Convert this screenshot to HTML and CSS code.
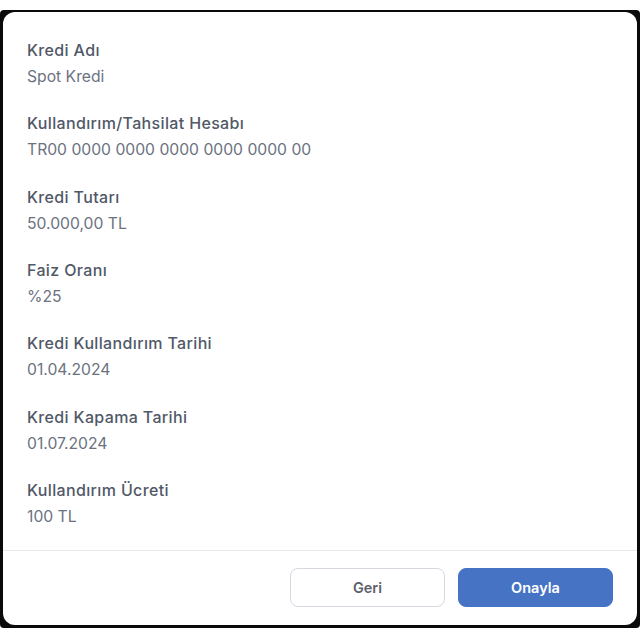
FILE: index.html
```html
<!DOCTYPE html>
<html lang="tr">
<head>
<meta charset="utf-8">
<title>Kredi Özeti</title>
<link rel="stylesheet" href="styles.css">
</head>
<body>
<div class="frame">
  <div class="card">
    <div class="details">
      <div class="field">
        <div class="label">Kredi Adı</div>
        <div class="value">Spot Kredi</div>
      </div>
      <div class="field">
        <div class="label">Kullandırım/Tahsilat Hesabı</div>
        <div class="value">TR00 0000 0000 0000 0000 0000 00</div>
      </div>
      <div class="field">
        <div class="label">Kredi Tutarı</div>
        <div class="value">50.000,00 TL</div>
      </div>
      <div class="field">
        <div class="label">Faiz Oranı</div>
        <div class="value">%25</div>
      </div>
      <div class="field">
        <div class="label">Kredi Kullandırım Tarihi</div>
        <div class="value">01.04.2024</div>
      </div>
      <div class="field">
        <div class="label">Kredi Kapama Tarihi</div>
        <div class="value">01.07.2024</div>
      </div>
      <div class="field">
        <div class="label">Kullandırım Ücreti</div>
        <div class="value">100 TL</div>
      </div>
    </div>
    <div class="footer">
      <button class="btn btn-secondary">Geri</button>
      <button class="btn btn-primary">Onayla</button>
    </div>
  </div>
</div>
</body>
</html>
```
FILE: styles.css
```css
html, body {
  margin: 0;
  padding: 0;
  background: #ffffff;
}

body {
  font-family: Inter, "Noto Sans", "DejaVu Sans", sans-serif;
}

.frame {
  margin-top: 10px;
  height: 618px;
  box-sizing: border-box;
  padding: 2px 3px 3px 3px;
  background: #0a0a0a;
  border-radius: 4px;
}

.card {
  height: 100%;
  box-sizing: border-box;
  background: #ffffff;
  border-radius: 12px;
  display: flex;
  flex-direction: column;
}

.details {
  flex: 1;
  padding: 25px 24px 0 24px;
  display: flex;
  flex-direction: column;
  gap: 20.33px;
}

.field {
  display: flex;
  flex-direction: column;
}

.label {
  font-size: 16px;
  line-height: 27px;
  font-weight: 500;
  letter-spacing: 0.35px;
  color: #515867;
}

.value {
  font-size: 15.7px;
  line-height: 26px;
  font-weight: 400;
  color: #6b7280;
}

.footer {
  border-top: 1px solid #e8eaee;
  padding: 17px 24px 18px 24px;
  display: flex;
  justify-content: flex-end;
  gap: 13px;
}

.btn {
  width: 155px;
  height: 39px;
  border-radius: 8px;
  font-family: Inter, "Noto Sans", sans-serif;
  font-size: 14.5px;
  font-weight: 600;
  cursor: pointer;
}

.btn-secondary {
  background: #ffffff;
  border: 1px solid #d5d8de;
  color: #5b616d;
}

.btn-primary {
  background: #4673c3;
  border: 1px solid #4673c3;
  color: #ffffff;
}
```
